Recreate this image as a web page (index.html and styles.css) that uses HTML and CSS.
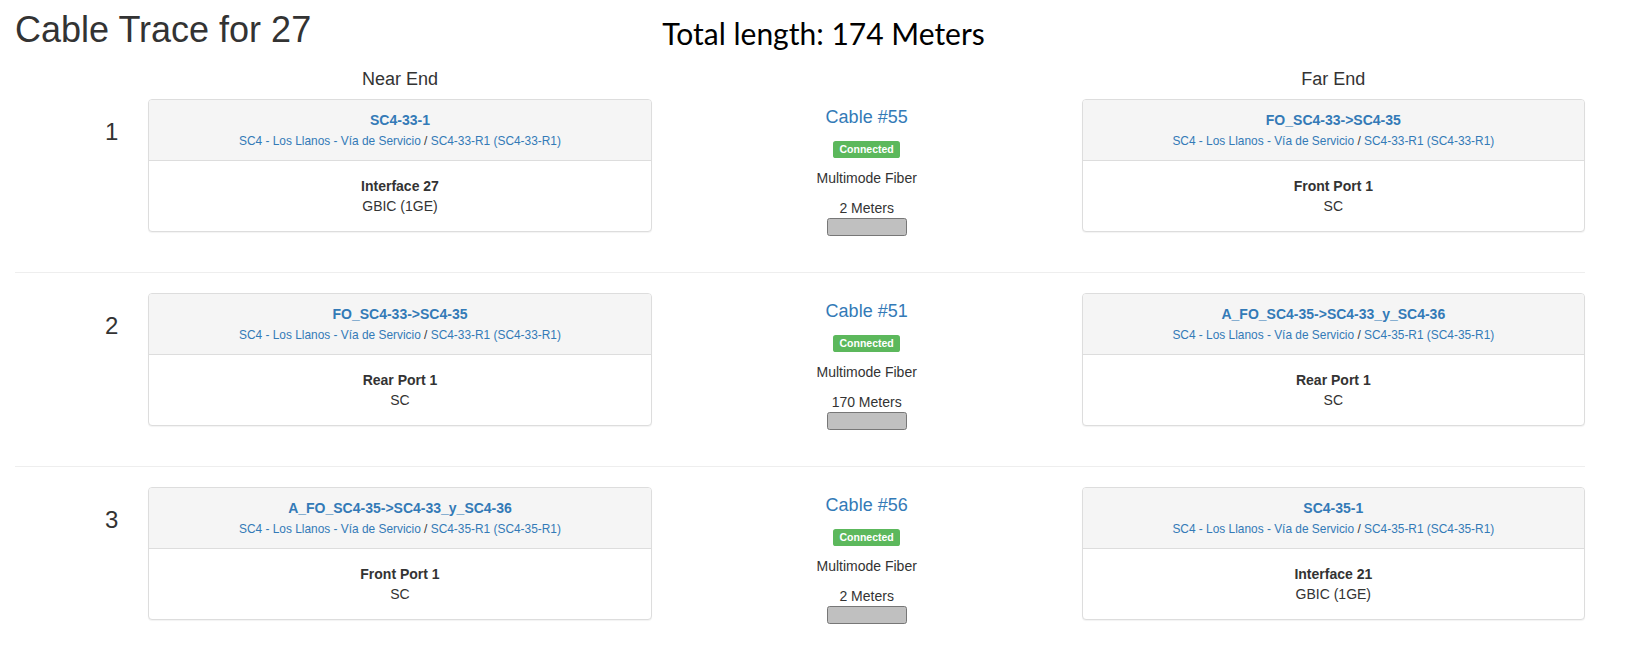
FILE: index.html
```html
<!DOCTYPE html>
<html lang="es">
<head>
<meta charset="utf-8">
<title>Cable Trace for 27</title>
<link rel="stylesheet" href="styles.css">
</head>
<body>
<div class="container">
  <div class="header">
    <h1 class="title">Cable Trace for 27</h1>
    <div class="total">Total length: 174 Meters</div>
  </div>

  <div class="grid ends">
    <h4 class="end near">Near End</h4>
    <h4 class="end far">Far End</h4>
  </div>

  <div class="grid seg">
    <h3 class="num">1</h3>
    <div class="cell">
      <div class="panel">
        <div class="panel-heading">
          <strong><a href="#">SC4-33-1</a></strong><br>
          <small><a href="#">SC4 - Los Llanos - Vía de Servicio</a> / <a href="#">SC4-33-R1 (SC4-33-R1)</a></small>
        </div>
        <div class="panel-body"><strong>Interface 27</strong><br>GBIC (1GE)</div>
      </div>
    </div>
    <div class="cable">
      <h4 class="cable-name"><a href="#">Cable #55</a></h4>
      <p><span class="label">Connected</span></p>
      <p>Multimode Fiber</p>
      2 Meters
      <span class="color-block">&nbsp;</span>
    </div>
    <div class="cell">
      <div class="panel">
        <div class="panel-heading">
          <strong><a href="#">FO_SC4-33-&gt;SC4-35</a></strong><br>
          <small><a href="#">SC4 - Los Llanos - Vía de Servicio</a> / <a href="#">SC4-33-R1 (SC4-33-R1)</a></small>
        </div>
        <div class="panel-body"><strong>Front Port 1</strong><br>SC</div>
      </div>
    </div>
  </div>
  <hr>

  <div class="grid seg">
    <h3 class="num">2</h3>
    <div class="cell">
      <div class="panel">
        <div class="panel-heading">
          <strong><a href="#">FO_SC4-33-&gt;SC4-35</a></strong><br>
          <small><a href="#">SC4 - Los Llanos - Vía de Servicio</a> / <a href="#">SC4-33-R1 (SC4-33-R1)</a></small>
        </div>
        <div class="panel-body"><strong>Rear Port 1</strong><br>SC</div>
      </div>
    </div>
    <div class="cable">
      <h4 class="cable-name"><a href="#">Cable #51</a></h4>
      <p><span class="label">Connected</span></p>
      <p>Multimode Fiber</p>
      170 Meters
      <span class="color-block">&nbsp;</span>
    </div>
    <div class="cell">
      <div class="panel">
        <div class="panel-heading">
          <strong><a href="#">A_FO_SC4-35-&gt;SC4-33_y_SC4-36</a></strong><br>
          <small><a href="#">SC4 - Los Llanos - Vía de Servicio</a> / <a href="#">SC4-35-R1 (SC4-35-R1)</a></small>
        </div>
        <div class="panel-body"><strong>Rear Port 1</strong><br>SC</div>
      </div>
    </div>
  </div>
  <hr>

  <div class="grid seg">
    <h3 class="num">3</h3>
    <div class="cell">
      <div class="panel">
        <div class="panel-heading">
          <strong><a href="#">A_FO_SC4-35-&gt;SC4-33_y_SC4-36</a></strong><br>
          <small><a href="#">SC4 - Los Llanos - Vía de Servicio</a> / <a href="#">SC4-35-R1 (SC4-35-R1)</a></small>
        </div>
        <div class="panel-body"><strong>Front Port 1</strong><br>SC</div>
      </div>
    </div>
    <div class="cable">
      <h4 class="cable-name"><a href="#">Cable #56</a></h4>
      <p><span class="label">Connected</span></p>
      <p>Multimode Fiber</p>
      2 Meters
      <span class="color-block">&nbsp;</span>
    </div>
    <div class="cell">
      <div class="panel">
        <div class="panel-heading">
          <strong><a href="#">SC4-35-1</a></strong><br>
          <small><a href="#">SC4 - Los Llanos - Vía de Servicio</a> / <a href="#">SC4-35-R1 (SC4-35-R1)</a></small>
        </div>
        <div class="panel-body"><strong>Interface 21</strong><br>GBIC (1GE)</div>
      </div>
    </div>
  </div>
</div>
</body>
</html>
```

FILE: styles.css
```css
* { box-sizing: border-box; }

html, body {
  margin: 0;
  padding: 0;
  background: #fff;
}

body {
  font-family: "Liberation Sans", Arial, Helvetica, sans-serif;
  font-size: 14px;
  line-height: 20px;
  color: #333;
}

a { color: #337ab7; text-decoration: none; }

.container {
  width: 1600px;
  padding: 0 15px;
}

.header {
  display: grid;
  grid-template-columns: 514px 589px;
  align-items: start;
}

.title {
  margin: 10px 0 10px;
  font-size: 36px;
  line-height: 1.1;
  font-weight: 500;
}

.total {
  margin-top: 17px;
  text-align: center;
  font-family: Lato, "Open Sans", sans-serif;
  font-size: 30px;
  line-height: 1.1;
  color: #000;
}

.grid {
  display: grid;
  grid-template-columns: 1fr 4fr 3fr 4fr;
  margin: 0 -15px;
}

.grid > * {
  padding: 0 15px;
}

.end {
  margin: 10px 0;
  font-size: 18px;
  line-height: 1.1;
  font-weight: 500;
  text-align: center;
}

.end.near { grid-column: 2; }
.end.far { grid-column: 4; }

.num {
  margin: 20px 0 10px;
  font-size: 24px;
  line-height: 1.1;
  font-weight: 500;
  text-align: right;
}

.panel {
  margin-bottom: 20px;
  background: #fff;
  border: 1px solid #ddd;
  border-radius: 4px;
  box-shadow: 0 1px 1px rgba(0, 0, 0, 0.05);
  text-align: center;
}

.panel-heading {
  padding: 10px 15px 9px;
  background: #f5f5f5;
  border-bottom: 1px solid #ddd;
  border-radius: 3px 3px 0 0;
}

.panel-heading small {
  font-size: 85%;
}

.panel-body {
  padding: 15px;
}

.cable {
  text-align: center;
}

.cable-name {
  margin: 9px 0 10px;
  font-size: 18px;
  line-height: 1.1;
  font-weight: 500;
}

.cable p {
  margin: 0 0 10px;
}

.label {
  display: inline;
  padding: 0.2em 0.6em 0.3em;
  font-size: 75%;
  font-weight: 700;
  line-height: 1;
  color: #fff;
  background: #5cb85c;
  border-radius: 0.25em;
  white-space: nowrap;
}

.color-block {
  display: block;
  width: 80px;
  margin: 0 auto;
  padding: 0.2em 0.6em 0.3em;
  font-size: 75%;
  line-height: 1;
  background: #c0c0c0;
  border: 1px solid #777;
  border-radius: 0.25em;
}

hr {
  margin: 20px 0;
  border: 0;
  border-top: 1px solid #eee;
}
```
